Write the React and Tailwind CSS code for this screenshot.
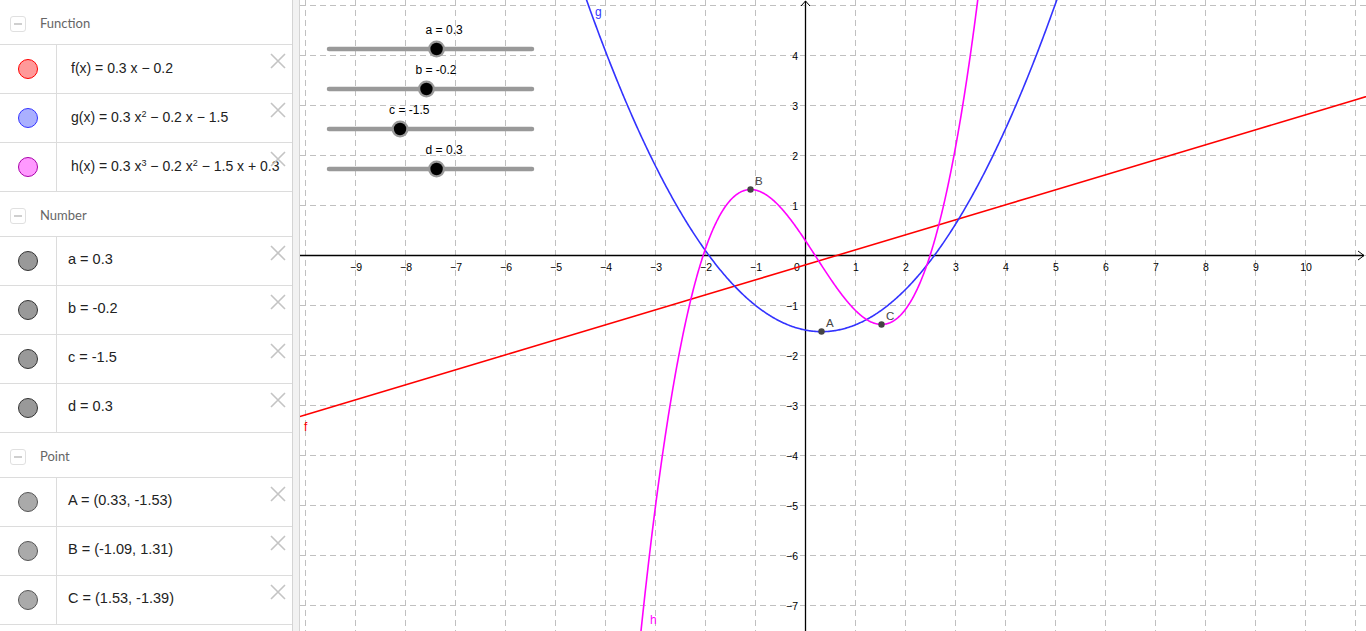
import React from "react";

const OX = 505; // local x of origin (805 - 300)
const OY = 255;
const S = 50;

function pathFor(fn, x0, x1, step = 0.01) {
  let d = "";
  for (let x = x0; x <= x1 + 1e-9; x += step) {
    let y = fn(x);
    let Y = OY - S * y;
    if (Y < -2000) Y = -2000;
    if (Y > 3000) Y = 3000;
    const X = OX + S * x;
    d += (d ? " L" : "M") + X.toFixed(2) + " " + Y.toFixed(2);
  }
  return d;
}

const f = (x) => 0.3 * x - 0.2;
const g = (x) => 0.3 * x * x - 0.2 * x - 1.5;
const h = (x) => 0.3 * x * x * x - 0.2 * x * x - 1.5 * x + 0.3;

function CloseX() {
  return (
    <svg width="16" height="16" viewBox="0 0 16 16" className="absolute right-[6px] top-[8px]">
      <path d="M1 1 L15 15 M15 1 L1 15" stroke="#c4c4c4" strokeWidth="1.6" fill="none" />
    </svg>
  );
}

function Header({ title }) {
  return (
    <div className="h-[45px] border-b border-[#dcdcdc] flex items-center">
      <div className="ml-[10px] w-[16px] h-[16px] rounded-[3px] border border-[#e0e0e0] flex items-center justify-center mt-[4px]">
        <div className="w-[8px] h-[2px] bg-[#cfcfcf]" />
      </div>
      <span className="ml-[14px] text-[13px] text-[#666] mt-[3px]" style={{ fontFamily: "Lato, 'Liberation Sans', sans-serif" }}>
        {title}
      </span>
    </div>
  );
}

function Row({ fill, border, children, pad = "pl-[14px]" }) {
  return (
    <div className="relative h-[49px] border-b border-[#dcdcdc] flex">
      <div className="w-[57px] border-r border-[#dcdcdc] flex items-center justify-center shrink-0">
        <div className={`w-[20px] h-[20px] rounded-full border ${fill} ${border}`} />
      </div>
      <div
        className={`flex items-center ${pad} pb-[2px] whitespace-nowrap text-[#222]`}
        style={{ fontFamily: "'Liberation Sans', Arial, sans-serif" }}
      >
        {children}
      </div>
      <CloseX />
    </div>
  );
}

const Sup = ({ children }) => (
  <span className="text-[9px] relative -top-[5px] leading-none">{children}</span>
);

function Graph() {
  const vLines = [];
  for (let X = 5; X <= 1066; X += 50) vLines.push(X);
  const hLines = [];
  for (let Y = 5; Y <= 631; Y += 50) hLines.push(Y);
  const xLabels = [];
  for (let k = -9; k <= 10; k++) if (k !== 0) xLabels.push(k);
  const yLabels = [];
  for (let k = -7; k <= 4; k++) if (k !== 0) yLabels.push(k);

  const sliders = [
    { name: "a", val: "0.3", v: 0.3, y: 49 },
    { name: "b", val: "-0.2", v: -0.2, y: 89 },
    { name: "c", val: "-1.5", v: -1.5, y: 129 },
    { name: "d", val: "0.3", v: 0.3, y: 169 },
  ];
  const pts = [
    { n: "A", x: 0.33, y: -1.53 },
    { n: "B", x: -1.09, y: 1.31 },
    { n: "C", x: 1.53, y: -1.39 },
  ];
  const font = "'Liberation Sans', Arial, sans-serif";
  const minus = (k) => (k < 0 ? "\u2212" + Math.abs(k) : String(k));

  return (
    <svg width="1066" height="631" viewBox="0 0 1066 631" className="block" style={{ fontFamily: font }}>
      {vLines.map((X) => (
        <line key={"v" + X} x1={X + 0.5} y1="0" x2={X + 0.5} y2="631" stroke="#c0c0c0" strokeWidth="1" strokeDasharray="6 4" />
      ))}
      {hLines.map((Y) => (
        <line key={"h" + Y} x1="0" y1={Y + 0.5} x2="1066" y2={Y + 0.5} stroke="#c0c0c0" strokeWidth="1" strokeDasharray="6 4" />
      ))}
      {/* axes */}
      <line x1="0" y1="255.5" x2="1064" y2="255.5" stroke="#000" strokeWidth="1.3" />
      <path d="M1058 251 L1064 255.5 L1058 260" stroke="#000" strokeWidth="1" fill="none" />
      <line x1="505.5" y1="1" x2="505.5" y2="631" stroke="#000" strokeWidth="1.3" />
      <path d="M501 6 L505.5 1 L510 6" stroke="#000" strokeWidth="1" fill="none" />
      {xLabels.map((k) => (
        <text key={"xl" + k} x={OX + S * k + 1} y="270.5" fontSize="10.5" textAnchor="middle" fill="#000">
          {minus(k)}
        </text>
      ))}
      <text x="497" y="270.5" fontSize="10.5" textAnchor="middle" fill="#000">0</text>
      {yLabels.map((k) => (
        <text key={"yl" + k} x="498" y={OY - S * k + 4.5} fontSize="10.5" textAnchor="end" fill="#000">
          {minus(k)}
        </text>
      ))}
      {/* curves */}
      <path d={pathFor(f, -10.5, 15, 0.5)} stroke="#ff0000" strokeWidth="1.6" fill="none" />
      <path d={pathFor(g, -8, 8, 0.02)} stroke="#3333ff" strokeWidth="1.6" fill="none" />
      <path d={pathFor(h, -4.5, 5, 0.01)} stroke="#ff00ff" strokeWidth="1.6" fill="none" />
      <text x="4" y="431" fontSize="12" fill="#ff0000">f</text>
      <text x="295" y="16" fontSize="12" fill="#3333ff">g</text>
      <text x="350" y="624" fontSize="12" fill="#ff00ff">h</text>
      {/* points */}
      {pts.map((p) => (
        <g key={p.n}>
          <circle cx={OX + S * p.x} cy={OY - S * p.y} r="3.2" fill="#444" />
          <text x={OX + S * p.x + 4.5} y={OY - S * p.y - 5} fontSize="11.5" fill="#444">
            {p.n}
          </text>
        </g>
      ))}
      {/* sliders */}
      {sliders.map((s) => {
        const kx = 29 + ((s.v + 5) / 10) * 203;
        return (
          <g key={s.name}>
            <line x1="29" y1={s.y} x2="232" y2={s.y} stroke="#999" strokeWidth="4.5" strokeLinecap="round" />
            <circle cx={kx} cy={s.y} r="8.5" fill="#9a9a9a" />
            <circle cx={kx} cy={s.y} r="6.2" fill="#000" />
            <text x={kx - 11} y={s.y - 15} fontSize="12" fill="#000">
              {s.name} = {s.val}
            </text>
          </g>
        );
      })}
    </svg>
  );
}

export default function App() {
  return (
    <div className="flex w-[1366px] h-[631px] overflow-hidden bg-white">
      <div className="w-[292px] shrink-0 bg-white overflow-hidden">
        <Header title="Function" />
        <Row fill="bg-[#ff9999]" border="border-[#ff0000]">
          <span className="text-[14px]">f(x) = 0.3 x − 0.2</span>
        </Row>
        <Row fill="bg-[#aab0ff]" border="border-[#3333ff]">
          <span className="text-[14px]">g(x) = 0.3 x<Sup>2</Sup> − 0.2 x − 1.5</span>
        </Row>
        <Row fill="bg-[#ff99ff]" border="border-[#aa00aa]">
          <span className="text-[14px]">h(x) = 0.3 x<Sup>3</Sup> − 0.2 x<Sup>2</Sup> − 1.5 x + 0.3</span>
        </Row>
        <Header title="Number" />
        {["a = 0.3", "b = -0.2", "c = -1.5", "d = 0.3"].map((t) => (
          <Row key={t} fill="bg-[#999999]" border="border-[#333333]" pad="pl-[11px]">
            <span className="text-[14.5px]">{t}</span>
          </Row>
        ))}
        <Header title="Point" />
        {["A = (0.33, -1.53)", "B = (-1.09, 1.31)", "C = (1.53, -1.39)"].map((t) => (
          <Row key={t} fill="bg-[#aaaaaa]" border="border-[#555555]" pad="pl-[11px]">
            <span className="text-[14.5px]">{t}</span>
          </Row>
        ))}
      </div>
      <div className="w-[8px] shrink-0 bg-[#f2f2f2] border-l border-r border-[#d4d4d4]" />
      <div className="relative flex-1">
        <Graph />
      </div>
    </div>
  );
}
